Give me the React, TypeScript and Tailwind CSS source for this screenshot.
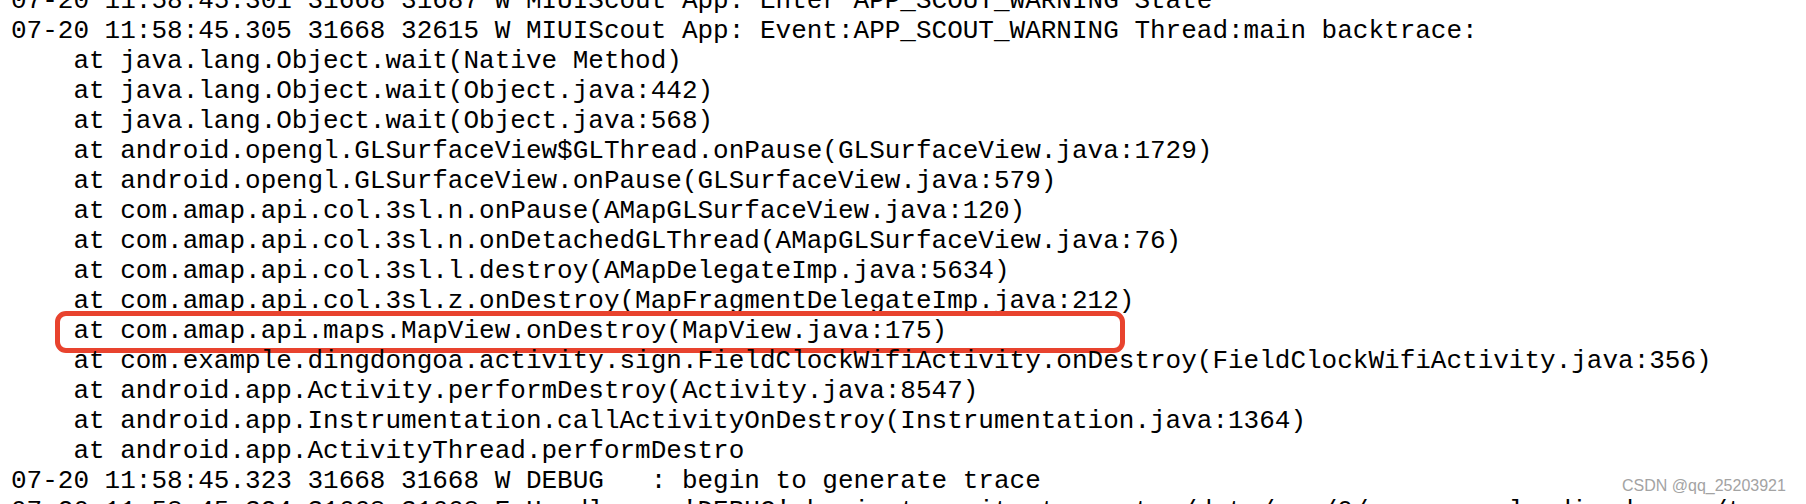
import React from 'react';

const lines: string[] = [
  '07-20 11:58:45.301 31668 31687 W MIUIScout App: Enter APP_SCOUT_WARNING State',
  '07-20 11:58:45.305 31668 32615 W MIUIScout App: Event:APP_SCOUT_WARNING Thread:main backtrace:',
  '    at java.lang.Object.wait(Native Method)',
  '    at java.lang.Object.wait(Object.java:442)',
  '    at java.lang.Object.wait(Object.java:568)',
  '    at android.opengl.GLSurfaceView$GLThread.onPause(GLSurfaceView.java:1729)',
  '    at android.opengl.GLSurfaceView.onPause(GLSurfaceView.java:579)',
  '    at com.amap.api.col.3sl.n.onPause(AMapGLSurfaceView.java:120)',
  '    at com.amap.api.col.3sl.n.onDetachedGLThread(AMapGLSurfaceView.java:76)',
  '    at com.amap.api.col.3sl.l.destroy(AMapDelegateImp.java:5634)',
  '    at com.amap.api.col.3sl.z.onDestroy(MapFragmentDelegateImp.java:212)',
  '    at com.amap.api.maps.MapView.onDestroy(MapView.java:175)',
  '    at com.example.dingdongoa.activity.sign.FieldClockWifiActivity.onDestroy(FieldClockWifiActivity.java:356)',
  '    at android.app.Activity.performDestroy(Activity.java:8547)',
  '    at android.app.Instrumentation.callActivityOnDestroy(Instrumentation.java:1364)',
  '    at android.app.ActivityThread.performDestro',
  '07-20 11:58:45.323 31668 31668 W DEBUG   : begin to generate trace',
  "07-20 11:58:45.324 31668 31668 E Handler : 'DEBUG' begin to write trace to /data/anr/0/com.example.dingdongoa/trace",
];

const HIGHLIGHT = 11;

export default function App() {
  return (
    <div className="relative w-[1806px] h-[504px] overflow-hidden bg-white">
      <div
        className="-mt-[14px] pl-[11px] text-[26px] leading-[30px] text-black whitespace-pre"
        style={{ fontFamily: '"Liberation Mono", "Courier New", monospace' }}
      >
        {lines.map((line, i) => (
          <div key={i} className="relative h-[30px]">
            {line}
            {i === HIGHLIGHT && (
              <span className="absolute left-[44px] -top-[5px] w-[1070px] h-[42px] border-[5px] border-[#e8432e] rounded-[11px]" />
            )}
          </div>
        ))}
      </div>
      <span
        className="absolute left-[1622px] top-[476px] text-[16px] leading-[20px] text-[#a3a3a3]"
        style={{ fontFamily: '"Liberation Sans", Arial, sans-serif' }}
      >
        CSDN @qq_25203921
      </span>
    </div>
  );
}
